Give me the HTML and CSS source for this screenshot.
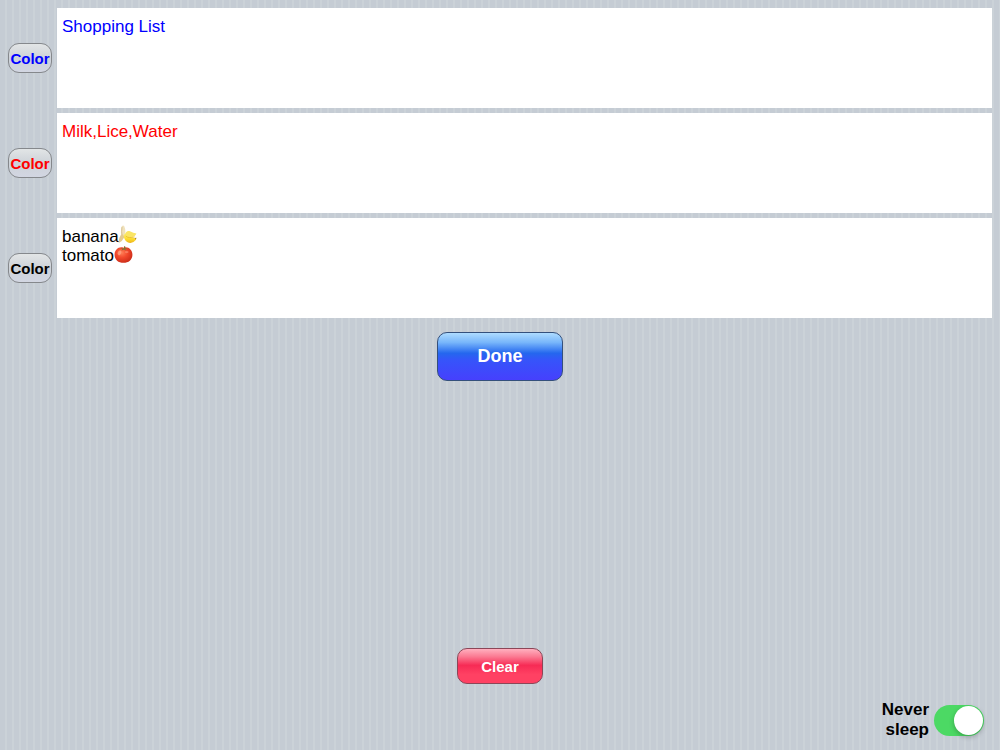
FILE: index.html
```
<!DOCTYPE html>
<html lang="en">
<head>
  <meta charset="UTF-8" />
  <meta name="viewport" content="width=device-width, initial-scale=1.0"/>
  <title>Memo</title>
  <link rel="stylesheet" href="styles.css">
</head>
<body>
  <main class="container">
    <div class="row">
      <button type="button" class="color-btn blue">Color</button>
      <textarea class="memo blue" aria-label="Text 1">Shopping List</textarea>
    </div>
    <div class="row">
      <button type="button" class="color-btn red">Color</button>
      <textarea class="memo red" aria-label="Text 2">Milk,Lice,Water</textarea>
    </div>
    <div class="row">
      <button type="button" class="color-btn black">Color</button>
      <textarea class="memo black" aria-label="Text 3">banana
tomato</textarea>
      <svg class="emoji banana" viewBox="0 0 20 20" aria-hidden="true">
        <defs>
          <linearGradient id="peel" x1="0" y1="0" x2="0" y2="1">
            <stop offset="0" stop-color="#fff06a"/>
            <stop offset="0.6" stop-color="#fbd92c"/>
            <stop offset="1" stop-color="#eeb41c"/>
          </linearGradient>
        </defs>
        <path d="M4 1.4 Q5.4 -0.2 6.6 1.4 Q8.2 5 7.6 9 L8 14 L3.6 12.6 Q2.4 6 4 1.4Z" fill="#f0e2bc"/>
        <path d="M4.2 2 Q3.4 7 4.4 12" fill="none" stroke="#d2bd8e" stroke-width="0.9"/>
        <path d="M4.4 9.5 Q0.6 12 0.8 19 Q4.8 17 7 12.4Z" fill="#e3ca90"/>
        <path d="M6 10 Q6 15.6 9.6 18 Q15 20.6 19 15.6 L19 13.6 Q15.6 14.4 13 12.2 Q10 8.6 6 10Z" fill="url(#peel)"/>
        <path d="M7 10.4 Q8.6 5.6 12 6.4 Q16.4 9 19.4 9 Q18 12.8 13.6 13 Q9.4 12.6 7 11Z" fill="#fae564"/>
        <path d="M8.2 11.6 Q11 14.4 17.6 12.6" fill="none" stroke="#e8b72a" stroke-width="0.8"/>
        <path d="M17.6 13.8 L19.4 13.4 L18.8 15.6Z" fill="#a5812f"/>
      </svg>
      <svg class="emoji tomato" viewBox="0 0 20 20" aria-hidden="true">
        <defs>
          <radialGradient id="tomatoSkin" cx="0.4" cy="0.35" r="0.7">
            <stop offset="0" stop-color="#ff8058"/>
            <stop offset="0.45" stop-color="#f3492c"/>
            <stop offset="1" stop-color="#c92a17"/>
          </radialGradient>
        </defs>
        <path d="M10 2.8 C15 1.2 19.4 5 19.4 10.2 C19.4 15.4 15.4 18.8 10 18.8 C4.6 18.8 0.6 15.4 0.6 10.2 C0.6 5 5 1.2 10 2.8Z" fill="url(#tomatoSkin)"/>
        <ellipse cx="5.8" cy="8.2" rx="1.8" ry="2.6" fill="#ffb092" opacity="0.65" transform="rotate(25 5.8 8.2)"/>
        <ellipse cx="13.4" cy="7.4" rx="2" ry="1.2" fill="#ffa283" opacity="0.5"/>
        <path d="M10.4 3.6 L7 3.4 L8.8 4.4 L8 5.8 L10.6 4.8 L12.4 6 L12 4.6 L14.4 4 L11.8 3.4 L11.8 1.4 L10.6 1.2Z" fill="#7d7434"/>
      </svg>
    </div>

    <button type="button" class="btn done">Done</button>

    <button type="button" class="btn clear">Clear</button>

    <div class="sleep">
      <label for="neverSleep">Never<br>sleep</label>
      <input type="checkbox" role="switch" id="neverSleep" class="switch" checked>
    </div>
  </main>
</body>
</html>
```

FILE: styles.css
```
* {
  box-sizing: border-box;
}

body {
  margin: 0;
  font-family: "Liberation Sans", Arial, sans-serif;
  background-color: #c5ccd4;
  background-image: repeating-linear-gradient(to right, #c5ccd4 0, #c5ccd4 5px, #cbd2d8 5px, #cbd2d8 7px);
}

.container {
  display: flex;
  flex-direction: column;
  min-height: 100vh;
  padding: 8px 8px 10px;
}

/* memo rows */
.row {
  position: relative;
  display: flex;
  align-items: center;
  gap: 5px;
  margin-bottom: 5px;
}

.color-btn {
  flex: none;
  width: 44px;
  height: 30px;
  padding: 0;
  border: 1px solid #85888c;
  border-radius: 11px;
  background: linear-gradient(#e2e5e6, #cdd2d8 50%, #d2d6e2);
  font: bold 15px "Liberation Sans", Arial, sans-serif;
}

.memo {
  flex: 1;
  min-width: 0;
  height: 100px;
  padding: 9px 5px;
  border: 0;
  border-radius: 0;
  outline: 0;
  resize: none;
  background: #fff;
  font: 17px/19px "Liberation Sans", Arial, sans-serif;
}

.blue {
  color: #0000ff;
}

.red {
  color: #ff0000;
}

.black {
  color: #000;
}

.emoji {
  position: absolute;
  width: 19px;
  height: 19px;
  pointer-events: none;
}

.banana {
  top: 7px;
  left: 110px;
}

.tomato {
  top: 27px;
  left: 106px;
}

/* buttons */
.btn {
  align-self: center;
  padding: 0;
  border-radius: 10px;
  color: #fff;
  font-family: inherit;
  font-weight: bold;
}

.done {
  width: 126px;
  height: 49px;
  margin-top: 9px;
  border: 1px solid #34507c;
  background: linear-gradient(#aedcff, #78b6fb 20%, #2467ee 43%, #3654fa 58%, #4640fd);
  font-size: 18px;
}

.clear {
  width: 86px;
  height: 36px;
  margin-top: auto;
  border: 1px solid #8c4657;
  background: linear-gradient(#ffb0bf, #fb7b93 22%, #f72b55 48%, #ff4163 75%, #ff4163);
  font-size: 15px;
}

/* never sleep switch */
.sleep {
  display: flex;
  align-self: flex-end;
  align-items: center;
  gap: 5px;
  margin: 16px 8px 0 0;
  font-size: 17px;
  font-weight: bold;
  line-height: 20px;
  text-align: right;
}

.switch {
  appearance: none;
  width: 50px;
  height: 31px;
  margin: 0;
  padding: 1px;
  border-radius: 16px;
  background: #b4bac1;
}

.switch::before {
  content: "";
  display: block;
  width: 29px;
  height: 29px;
  border-radius: 50%;
  background: #fff;
  box-shadow: 0 2px 5px rgba(0, 0, 0, 0.25);
}

.switch:checked {
  background: #4cd964;
}

.switch:checked::before {
  margin-left: auto;
}
```
